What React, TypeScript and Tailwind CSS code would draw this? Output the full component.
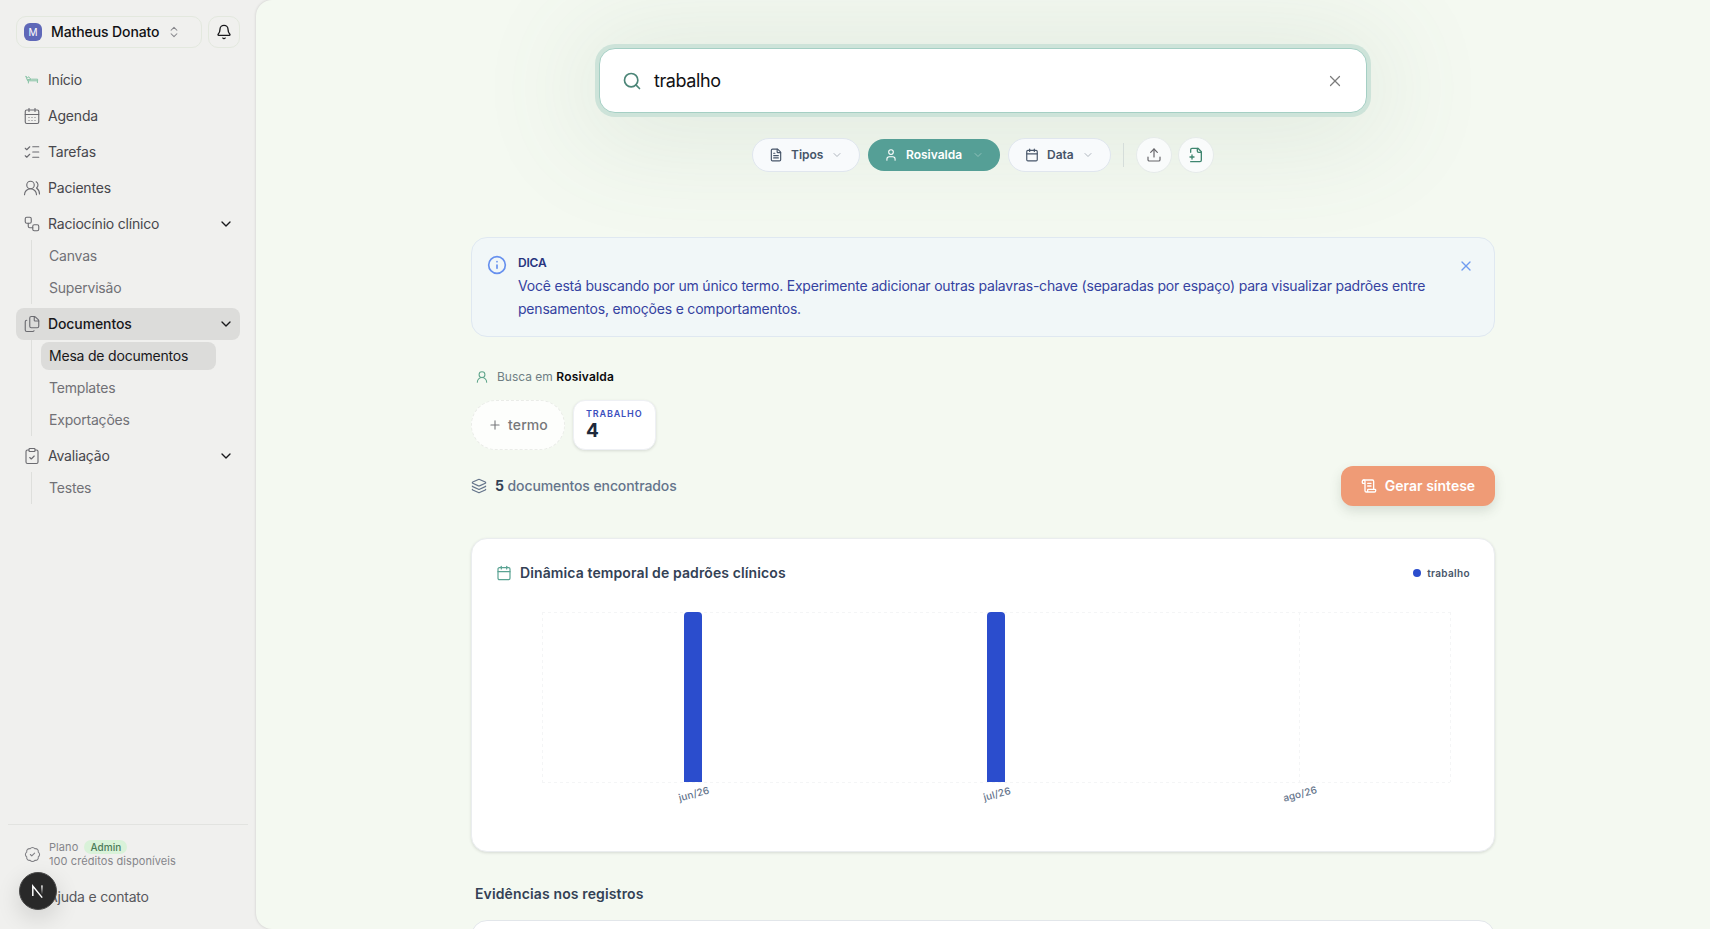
import type { LucideIcon } from "lucide-react"
import {
  BadgeCheck,
  Bell,
  Calendar,
  CalendarDays,
  ChevronDown,
  ChevronsUpDown,
  ClipboardCheck,
  FileText,
  Files,
  Info,
  Layers,
  ListChecks,
  Plus,
  ScrollText,
  Search,
  Upload,
  User,
  UserRound,
  UsersRound,
  Workflow,
  X,
} from "lucide-react"

type NavItem = {
  label: string
  icon?: LucideIcon
  active?: boolean
  children?: { label: string; active?: boolean }[]
}

const navItems: NavItem[] = [
  { label: "Início" },
  { label: "Agenda", icon: CalendarDays },
  { label: "Tarefas", icon: ListChecks },
  { label: "Pacientes", icon: UsersRound },
  { label: "Raciocínio clínico", icon: Workflow, children: [{ label: "Canvas" }, { label: "Supervisão" }] },
  {
    label: "Documentos",
    icon: Files,
    active: true,
    children: [{ label: "Mesa de documentos", active: true }, { label: "Templates" }, { label: "Exportações" }],
  },
  { label: "Avaliação", icon: ClipboardCheck, children: [{ label: "Testes" }] },
]

const months = [
  { label: "jun/26", x: 151, value: 2 },
  { label: "jul/26", x: 454, value: 2 },
  { label: "ago/26", x: 757, value: 0 },
]

function CouchIcon() {
  return (
    <svg width="14" height="10" viewBox="0 0 14 10" fill="none" stroke="#86c2a4" strokeWidth="1" strokeLinecap="round" strokeLinejoin="round">
      <path d="M1 1.6 2.6 5.8h10V4.2H6.2L4.8 3.4 3.8 1.8 2.6 2.6 1 1.6Z" />
      <path d="M3.4 6v2M12.4 6v1.6M2.6 4.6h3" />
    </svg>
  )
}

function FilePlusIcon() {
  return (
    <svg width="16" height="16" viewBox="0 0 24 24" fill="none" stroke="#3f8670" strokeWidth="2" strokeLinecap="round" strokeLinejoin="round">
      <path d="M4 22h14a2 2 0 0 0 2-2V7l-5-5H6a2 2 0 0 0-2 2v4" />
      <path d="M14 2v4a2 2 0 0 0 2 2h4" />
      <path d="M3 15h6" />
      <path d="M6 12v6" />
    </svg>
  )
}

function NavRow({ item }: { item: NavItem }) {
  const Icon = item.icon
  return (
    <li>
      <div
        className={`flex h-8 items-center gap-[7px] rounded-lg px-[7px] text-sm ${item.active ? "bg-[#dcdcda] font-medium tracking-[-0.1px] text-[#18181b]" : "tracking-[-0.2px] text-[#47474c]"}`}
      >
        <span className="flex w-[18px] justify-center text-[#6b6b70]">
          {Icon ? <Icon size={18} strokeWidth={1.5} /> : <CouchIcon />}
        </span>
        <span className="flex-1">{item.label}</span>
        {item.children && <ChevronDown size={16} strokeWidth={2} className="mr-[-1px] text-[#18181b]" />}
      </div>
      {item.children && (
        <ul className="mr-6 ml-[15px] flex flex-col gap-1 border-l border-[#dedfdc] py-0.5 pl-[9px]">
          {item.children.map((child) => (
            <li
              key={child.label}
              className={`flex h-7 items-center rounded-lg px-2 text-sm tracking-[-0.2px] ${child.active ? "bg-[#dcdcda] text-[#18181b]" : "text-[#717176]"}`}
            >
              {child.label}
            </li>
          ))}
        </ul>
      )}
    </li>
  )
}

function Sidebar() {
  return (
    <aside className="flex w-64 shrink-0 flex-col">
      <div className="flex gap-1.5 px-4 pt-4">
        <div className="flex h-8 w-[186px] items-center rounded-[10px] border border-[#e3e8de] pl-[7px]">
          <span className="flex size-[18px] items-center justify-center rounded-md bg-[#5f68b8] text-[10px] text-white">M</span>
          <span className="ml-[9px] text-sm font-medium tracking-[-0.1px] text-[#111114]">Matheus Donato</span>
          <ChevronsUpDown size={14} strokeWidth={1.8} className="ml-2 text-[#85858a]" />
        </div>
        <div className="flex size-8 items-center justify-center rounded-[10px] border border-[#e3e8de] text-[#18181b]">
          <Bell size={16} />
        </div>
      </div>

      <ul className="mt-4 flex flex-col gap-1 px-4">
        {navItems.map((item) => (
          <NavRow key={item.label} item={item} />
        ))}
      </ul>

      <div className="mx-2 mt-auto h-[105px] border-t border-[#e2e3e0] px-2 pt-[15px]">
        <div className="flex items-center gap-2 pl-2">
          <BadgeCheck size={17} strokeWidth={1.5} className="text-[#808085]" />
          <div className="text-[11px] leading-[14px] tracking-[0.08px] text-[#85858a]">
            <div className="flex items-center gap-1.5">
              Plano
              <span className="rounded-full bg-[#d9f2d9] px-1.5 text-[10px] font-medium text-[#4b7a58]">Admin</span>
            </div>
            <div>100 créditos disponíveis</div>
          </div>
        </div>
        <div className="mt-[19px] pl-8 text-sm tracking-[-0.2px] text-[#58585d]">Ajuda e contato</div>
      </div>
    </aside>
  )
}

function SearchArea() {
  return (
    <section className="relative flex flex-col items-center pt-12">
      <div className="absolute top-12 h-16 w-[768px] rounded-2xl shadow-[0_8px_110px_20px_rgba(90,125,100,0.12)]" />
      <div className="relative flex h-[65px] w-[768px] items-center rounded-2xl border border-[#a5cfc4] bg-white pr-[22px] pl-[22px] ring-4 ring-[#cde3d9]">
        <Search size={20} strokeWidth={2} className="text-[#4b8577]" />
        <span className="ml-3 flex-1 text-lg tracking-[-0.4px] text-[#111114]">trabalho</span>
        <X size={18} strokeWidth={1.6} className="text-[#7c7c7c]" />
      </div>

      <div className="relative mt-6 flex h-9 items-center text-xs font-semibold">
        <div className="flex h-[34px] w-[108px] items-center rounded-full border border-[#e0e6ee] bg-[#f8fafc] px-4 text-[#475569]">
          <FileText size={14} />
          <span className="ml-2 flex-1">Tipos</span>
          <ChevronDown size={12} className="text-[#b0b6bf]" />
        </div>
        <div className="ml-2 flex h-8 w-[132px] items-center rounded-full bg-[#559f96] px-4 text-white">
          <User size={14} strokeWidth={1.8} />
          <span className="ml-2 flex-1">Rosivalda</span>
          <ChevronDown size={12} className="text-[#8fc1ba]" />
        </div>
        <div className="ml-2 flex h-[34px] w-[103px] items-center rounded-full border border-[#e0e6ee] bg-[#f8fafc] px-4 text-[#475569]">
          <Calendar size={14} />
          <span className="ml-2 flex-1">Data</span>
          <ChevronDown size={12} className="text-[#b0b6bf]" />
        </div>
        <div className="mx-3 h-6 w-px bg-[#d5ddda]" />
        <div className="flex size-9 items-center justify-center rounded-full border border-[#e6ebea] bg-[#f9fbfb] text-[#66666b]">
          <Upload size={16} strokeWidth={1.8} />
        </div>
        <div className="ml-1.5 flex size-9 items-center justify-center rounded-full border border-[#e6ebea] bg-[#f9fbfb]">
          <FilePlusIcon />
        </div>
      </div>
    </section>
  )
}

function TipCard() {
  return (
    <div className="mt-16 flex h-[100px] items-start rounded-2xl border border-[#dfe8f1] bg-[#f1f7f8] pt-[17px] pr-5 pl-[15px]">
      <Info size={20} strokeWidth={2} className="text-[#6690ee]" />
      <div className="ml-[11px] flex-1">
        <div className="text-xs leading-4 font-semibold tracking-[-0.2px] text-[#27347f]">DICA</div>
        <p className="mt-[3px] w-[930px] text-sm leading-[23px] tracking-[-0.2px] text-[#3542a0]">
          Você está buscando por um único termo. Experimente adicionar outras palavras-chave (separadas por espaço) para visualizar padrões entre pensamentos, emoções e comportamentos.
        </p>
      </div>
      <X size={16} strokeWidth={2} className="mt-[3px] text-[#6f9bf0]" />
    </div>
  )
}

function TermChips() {
  return (
    <div className="mt-[15px] flex gap-2">
      <div className="flex h-[50px] w-[94px] items-center justify-center gap-1.5 rounded-full border border-dashed border-[#eaece8] bg-[#fdfefc] text-sm font-medium tracking-[0.1px] text-[#77777a]">
        <Plus size={14} strokeWidth={1.9} />
        termo
      </div>
      <div className="h-[50px] w-[83px] rounded-xl border border-[#eef0f4] bg-white pt-[7px] pl-3 shadow-[0_1px_3px_rgba(0,0,0,0.12)]">
        <div className="text-[9px] leading-3 font-semibold tracking-[0.095em] text-[#3a4dbd]">TRABALHO</div>
        <div className="text-[19px] leading-[21px] font-bold text-[#1e293b]">4</div>
      </div>
    </div>
  )
}

function PatternChart() {
  const height = 170
  return (
    <svg width="976" height="220" viewBox="0 0 976 220" className="mt-[19px]">
      <g transform="translate(46 10)">
        <g stroke="#f4f5f6" strokeDasharray="3 3">
          <path d="M0 .5H908M0 170.5H908" />
          {[0, 151, 454, 757, 908].map((x) => (
            <path key={x} d={`M${x + 0.5} 0V${height}`} />
          ))}
        </g>
        {months.map((m) => (
          <g key={m.label}>
            {m.value > 0 && <path d={`M${m.x - 9} ${height}V4a4 4 0 0 1 4-4h10a4 4 0 0 1 4 4V${height}Z`} fill="#2b4dcd" />}
            <text
              transform={`translate(${m.x + 1} 182) rotate(-15)`}
              textAnchor="middle"
              dy="3.5"
              className="fill-[#64748b] text-[10px] font-medium tracking-[0.1px]"
            >
              {m.label}
            </text>
          </g>
        ))}
      </g>
    </svg>
  )
}

export default function App() {
  return (
    <div className="relative flex h-[929px] w-[1710px] overflow-hidden bg-[#f0f0ee] font-['Inter',sans-serif]">
      <Sidebar />

      <main className="flex-1 overflow-hidden rounded-l-2xl bg-[#f4f9f1] shadow-[0_0_3px_rgba(0,0,0,0.16)]">
        <SearchArea />

        <div className="relative mx-auto w-[1024px]">
          <TipCard />

          <div className="mt-8 flex h-4 items-center pl-1 text-xs text-[#6f7f84]">
            <UserRound size={14} strokeWidth={1.8} className="text-[#5fa58b]" />
            <span className="ml-2">
              Busca em <span className="font-semibold tracking-[0.2px] text-[#0b0b0d]">Rosivalda</span>
            </span>
          </div>

          <TermChips />

          <div className="mt-4 flex h-10 items-center justify-between">
            <div className="flex items-center gap-2 text-sm font-medium tracking-[-0.1px] text-[#64748b]">
              <Layers size={16} strokeWidth={1.8} />
              <span>
                <span className="font-bold text-[#334155]">5</span> documentos encontrados
              </span>
            </div>
            <button className="flex h-10 w-[154px] items-center justify-center gap-2 rounded-xl bg-[#ef9b76] text-sm font-semibold text-white shadow-[0_5px_12px_rgba(60,80,60,0.16)]">
              <ScrollText size={16} />
              Gerar síntese
            </button>
          </div>

          <section className="mt-8 h-[314px] rounded-2xl border border-[#eaedef] bg-white px-6 pt-6 shadow-[0_1px_3px_rgba(0,0,0,0.12)]">
            <div className="flex h-5 items-center justify-between">
              <h2 className="flex items-center gap-2 text-sm font-semibold tracking-[0.11px] text-[#334155]">
                <Calendar size={16} strokeWidth={1.8} className="text-[#5aa393]" />
                Dinâmica temporal de padrões clínicos
              </h2>
              <span className="flex items-center gap-1.5 text-[10px] font-semibold tracking-[0.35px] text-[#475569]">
                <span className="size-2 rounded-full bg-[#2b4dcd]" />
                trabalho
              </span>
            </div>
            <PatternChart />
          </section>

          <h2 className="mt-8 pl-1 text-sm leading-5 font-semibold tracking-[0.13px] text-[#334155]">Evidências nos registros</h2>
          <div className="mt-4 h-24 rounded-2xl border border-[#e2e6ea] bg-white" />
        </div>
      </main>

      {/* dev tools badge floating over the sidebar footer */}
      <div className="absolute bottom-[19px] left-[19px] flex size-[38px] items-center justify-center rounded-full border border-[#4a4a4a] bg-[#292929] shadow-[0_8px_24px_rgba(0,0,0,0.14)]">
        <svg width="16" height="16" viewBox="0 0 16 16" fill="none" strokeWidth="1.5">
          <defs>
            <linearGradient id="badgeFade" x1="0" y1="0" x2="0" y2="1">
              <stop stopColor="#fff" />
              <stop offset="1" stopColor="#fff" stopOpacity="0" />
            </linearGradient>
          </defs>
          <path d="M2.8 13V3l9.4 11.6" stroke="#fff" />
          <rect x="11.2" y="2.4" width="1.5" height="9" fill="url(#badgeFade)" />
        </svg>
      </div>
    </div>
  )
}
